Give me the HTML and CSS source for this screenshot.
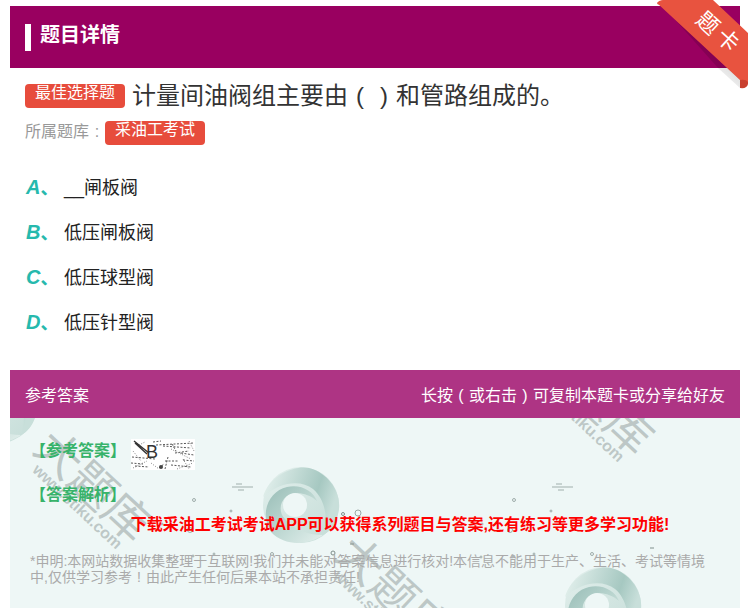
FILE: index.html
```html
<!DOCTYPE html>
<html lang="zh">
<head>
<meta charset="utf-8">
<title>题目详情</title>
<link rel="stylesheet" href="styles.css">
</head>
<body>
<main class="card">
  <header class="head"><h1 class="head-title">题目详情</h1></header>
  <svg class="ribbon" width="110" height="110" viewBox="0 0 110 110">
    <defs>
      <linearGradient id="rs" x1="1" y1="0" x2="0" y2="1"><stop offset="0" stop-color="#000" stop-opacity=".28"/><stop offset="1" stop-color="#000" stop-opacity="0"/></linearGradient>
      <linearGradient id="rw" x1="1" y1="0" x2="0" y2="1"><stop offset="0" stop-color="#8a8a8a" stop-opacity=".35"/><stop offset="1" stop-color="#8a8a8a" stop-opacity="0"/></linearGradient>
    </defs>
    <path d="M22 14 L92 80 L92 68 L70 68 Z" fill="url(#rs)"/>
    <path d="M70 68 L92 88 L92 68 Z" fill="url(#rw)"/>
    <path d="M9 4 Q12 0 18 0 L24 0 L22 7 Z" fill="#c8402f"/>
    <path d="M92 70 L92 88 Q99 89 100 84 L100 66 Z" fill="#c8402f"/>
    <path d="M9 3 Q11 0 16 0 L65 0 L100 33 L100 82 Q98 79 92 80 Z" fill="#e8533f"/>
    <text class="ribbon-text" transform="translate(60 23) rotate(42) translate(-11 8)">题</text>
    <text class="ribbon-text" transform="translate(80 40) rotate(42) translate(-11 8)">卡</text>
  </svg>
  <section class="question">
    <div class="q-title"><span class="tag">最佳选择题</span><span>计量间油阀组主要由<span class="paren">(</span><span class="paren">)</span>和管路组成的。</span></div>
    <div class="q-bank"><span class="bank-label">所属题库<span class="paren">:</span></span><span class="tag">采油工考试</span></div>
  </section>
  <ul class="options">
    <li class="option"><span class="opt-key">A<i class="opt-dun">、</i></span><span>__闸板阀</span></li>
    <li class="option"><span class="opt-key">B<i class="opt-dun">、</i></span><span>低压闸板阀</span></li>
    <li class="option"><span class="opt-key">C<i class="opt-dun">、</i></span><span>低压球型阀</span></li>
    <li class="option"><span class="opt-key">D<i class="opt-dun">、</i></span><span>低压针型阀</span></li>
  </ul>
  <section class="answer">
    <div class="answer-bar"><span>参考答案</span><span>长按<span class="paren">(</span>或右击<span class="paren">)</span>可复制本题卡或分享给好友</span></div>
    <div class="answer-body">
      <svg class="art" width="730" height="190" viewBox="0 0 730 190">
        <defs>
          <linearGradient id="sw0" x1="0" y1="0" x2="1" y2="1"><stop offset="0" stop-color="#e2efec"/><stop offset="1" stop-color="#c4dcd7"/></linearGradient>
          <linearGradient id="sw1" x1="0" y1="0" x2="1" y2=".3"><stop offset="0" stop-color="#e9f4f1"/><stop offset=".75" stop-color="#a6c8c1"/><stop offset="1" stop-color="#c8dfda"/></linearGradient>
          <linearGradient id="sw2" x1="0" y1="0" x2="1" y2="1"><stop offset="0" stop-color="#98bdb6"/><stop offset=".6" stop-color="#c4dcd7"/><stop offset="1" stop-color="#e4f0ed"/></linearGradient>
          <g id="swirl">
            <circle cx="6" cy="0" r="38" fill="url(#sw0)"/>
            <path d="M-32 -8 C-26 -30 0 -40 14 -37 C34 -32 46 -12 44 4 C42 18 36 26 28 30 C34 14 30 -6 18 -16 C6 -25 -14 -24 -32 -8Z" fill="url(#sw1)"/>
            <path d="M-24 27 C-36 8 -26 -14 -8 -18 C6 -21 18 -14 22 -4 C12 -13 -2 -14 -9 -8 C-16 -2 -16 8 -10 14 C-2 24 12 30 28 30 C14 40 -10 42 -24 27Z" fill="url(#sw2)"/>
            <circle cx="0" cy="0" r="12" fill="#eef7f6"/>
          </g>
          <g id="specks" fill="none" stroke="#7f8f8c" stroke-width=".7">
            <path d="M222 69 H243 M228 72 H234 M226 66 h6"/>
            <circle cx="184" cy="82" r="1.5"/><circle cx="221" cy="93" r="1"/>
            <circle cx="180" cy="112" r="2.5"/><circle cx="152" cy="106" r="1"/>
            <circle cx="151" cy="139" r="1"/><circle cx="183" cy="138" r="1"/>
            <circle cx="204" cy="136" r="1"/><circle cx="262" cy="136" r="1.5"/>
          </g>
        </defs>
        <use href="#swirl" x="-17" y="-13"/>
        <use href="#swirl" x="285" y="87"/>
        <use href="#swirl" x="587" y="187"/>
        <use href="#specks"/>
        <use href="#specks" x="320"/>
        <circle cx="333" cy="96" r="1.5" fill="none" stroke="#7f8f8c"/>
        <circle cx="348" cy="95" r="3" fill="none" stroke="#9aa8a5"/>
        <circle cx="650" cy="110" r="1.5" fill="none" stroke="#7f8f8c"/>
        <circle cx="323" cy="135" r="2" fill="none" stroke="#7f8f8c"/>
        <path d="M340 126 h4 M640 130 h4" stroke="#7f8f8c"/>
      </svg>
      <div class="mark mark-a"><b class="mark-big">大题库</b><span class="mark-url">www.stiku.com</span></div>
      <div class="mark mark-b"><b class="mark-big">大题库</b><span class="mark-url">www.stiku.com</span></div>
      <div class="mark mark-c"><b class="mark-big">大题库</b><span class="mark-url">www.stiku.com</span></div>
      <div class="answer-row">
        <span class="label">【参考答案】</span>
        <span class="stamp">
          <svg class="stamp-noise" width="64" height="31" viewBox="0 0 64 31">
            <path d="M3 2 L18 14 M4 4 L16 15" stroke="#333" stroke-width="1.4"/>
            <path d="M25 6 L63 4 M32 7 L60 9 M41 5 L45 12 M37 18 L34 30 M34 22 L48 22 M1 18 L24 20 M50 14 L63 16 M4 27 L18 28 M40 26 L60 28 M28 29 L33 25 M0 24 L12 25 M44 14 L58 12 M22 3 L30 2 M52 21 L63 22" stroke="#444" stroke-width=".9" stroke-dasharray="2 1.5" fill="none"/>
            <circle cx="30" cy="28" r="2" fill="#444"/>
            <path d="M2 12 L10 22 M52 20 L58 30 M8 6 L14 3 M20 24 L28 30 M40 10 L60 20 M2 29 L16 22 M46 30 L62 24 M58 2 L63 12" stroke="#777" stroke-width=".9" stroke-dasharray="1 1.5"/>
          </svg>
          <span class="stamp-text">B</span>
        </span>
      </div>
      <div class="label analysis">【答案解析】</div>
      <p class="promo">下载采油工考试考试APP可以获得系列题目与答案,还有练习等更多学习功能!</p>
      <p class="note">*申明:本网站数据收集整理于互联网!我们并未能对答案信息进行核对!本信息不能用于生产、生活、考试等情境中,仅供学习参考<span class="paren">!</span>由此产生任何后果本站不承担责任!</p>
    </div>
  </section>
</main>
</body>
</html>
```
FILE: styles.css
```css
* { box-sizing: border-box; }
html, body { margin: 0; padding: 0; background: #fff; }
body {
  width: 750px;
  height: 608px;
  overflow: hidden;
  font-family: "Liberation Sans", "Noto Sans CJK SC", sans-serif;
  color: #333;
}
.card { position: relative; padding: 6px 10px 0; height: 608px; }
.head {
  height: 62px;
  background: #990060;
  display: flex;
  align-items: center;
  padding-left: 15px;
}
.head-title {
  margin: 0;
  padding-left: 9px;
  border-left: 6px solid #fff;
  height: 27px;
  line-height: 23px;
  font-size: 20px;
  font-weight: 700;
  color: #fff;
}
.ribbon { position: absolute; left: 648px; top: 0; }
.ribbon-text { font-size: 22px; fill: #fff; font-family: "Noto Sans CJK SC", sans-serif; }
.paren { display: inline-block; width: 1em; text-align: center; }
.question { padding: 13px 15px 0; }
.q-title { display: flex; align-items: center; gap: 7px; height: 30px; font-size: 24px; line-height: 30px; white-space: nowrap; }
.tag {
  display: inline-block;
  width: 100px;
  height: 24px;
  background: #e74c3c;
  border-radius: 4px;
  color: #fff;
  font-size: 16px;
  line-height: 18px;
  text-align: center;
}
.q-bank { display: flex; align-items: center; height: 24px; margin-top: 10px; font-size: 16px; color: #999; }
.bank-label { width: 80px; white-space: nowrap; line-height: 20px; padding-bottom: 2px; }
.options { list-style: none; margin: 18px 0 0; padding: 0 0 0 16px; }
.option { display: flex; align-items: center; height: 45px; font-size: 18px; color: #222; }
.opt-key { width: 38px; font-size: 20px; font-weight: 700; font-style: italic; color: #26b9ad; white-space: nowrap; }
.opt-dun { font-style: normal; font-size: 18px; }
.answer { position: absolute; left: 10px; top: 370px; width: 730px; }
.answer-bar {
  height: 48px;
  background: #ae3484;
  color: #fff;
  display: flex;
  justify-content: space-between;
  align-items: center;
  padding: 0 15px;
  font-size: 16px;
}
.answer-body {
  position: relative;
  height: 190px;
  overflow: hidden;
  background: #eef7f6;
  padding: 21px 20px 0;
}
.art { position: absolute; left: 0; top: 0; }
.mark { position: absolute; width: 190px; transform: rotate(43deg); transform-origin: 0 0; color: rgba(140, 152, 150, .5); white-space: nowrap; }
.mark-big { display: block; font-size: 46px; line-height: 46px; font-weight: 400; }
.mark-url { display: block; margin-top: -6px; padding-left: 14px; font-size: 16px; line-height: 18px; font-weight: 700; }
.mark-a { left: 48px; top: 4px; }
.mark-b { left: 349px; top: 110px; }
.mark-c { left: 550px; top: -83px; }
.answer-row { position: relative; display: flex; align-items: flex-start; height: 31px; }
.label { position: relative; font-size: 16px; font-weight: 700; color: #37b36a; line-height: 24px; }
.stamp { position: relative; display: block; width: 64px; height: 31px; margin-left: 5px; background: #fff; }
.stamp-noise { position: absolute; left: 0; top: 0; }
.stamp-text { position: absolute; left: 15px; top: 1px; font-size: 18px; line-height: 24px; color: #333; }
.analysis { margin-top: 13px; }
.promo { position: relative; margin: 6px 0 0; padding-left: 50px; text-align: center; font-size: 16px; font-weight: 700; line-height: 24px; color: #f00; white-space: nowrap; }
.note { position: relative; margin: 16px 0 0; width: 680px; font-size: 14px; line-height: 16px; color: #aaa; }
```
